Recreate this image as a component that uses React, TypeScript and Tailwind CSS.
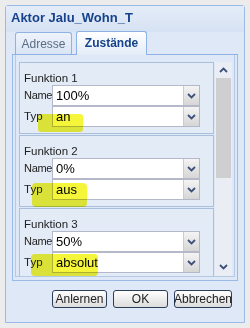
import React from "react";

const Chevron = ({ up = false }: { up?: boolean }) => (
  <svg width="9" height="6" viewBox="0 0 9 6" className={up ? "rotate-180" : ""}>
    <path d="M1 1 L4.5 4.5 L8 1" fill="none" stroke="#3d4f7a" strokeWidth="1.8" />
  </svg>
);

const Combo = ({ value }: { value: string }) => (
  <div className="flex h-[21px] w-[148px] border border-[#b5b8c8] bg-white">
    <div className="flex-1 pl-[3px] text-[13px] leading-[19px] text-black">{value}</div>
    <div className="flex w-[16px] items-center justify-center border-l border-[#c8ccd6] bg-gradient-to-b from-[#f4f4f4] to-[#d6d6d6]">
      <Chevron />
    </div>
  </div>
);

const Fieldset = ({ title, name, typ }: { title: string; name: string; typ: string }) => (
  <div className="flex h-[72px] w-[195px] shrink-0 flex-col border border-[#a9bfdc] bg-[#e3ebf7] pl-[4px] pt-[8px]">
    <div className="h-[14px] text-[11.5px] leading-[14px] text-[#222]">{title}</div>
    <div className="flex items-center">
      <div className="w-[28px] text-[11px] tracking-[-0.3px] text-[#222]">Name</div>
      <Combo value={name} />
    </div>
    <div className="flex items-center">
      <div className="w-[28px] text-[11.5px] text-[#222]">Typ</div>
      <Combo value={typ} />
    </div>
  </div>
);

export default function App() {
  return (
    <div
      className="relative h-[328px] w-[250px] overflow-hidden bg-[#ececec] pl-[5px] pt-[5px]"
      style={{ fontFamily: "'Liberation Sans', Arial, sans-serif" }}
    >
      <div className="flex h-[318px] w-[240px] flex-col rounded-t-[3px] border border-[#99bbe8] bg-[#dfe8f6]">
        <div className="h-[26px] bg-gradient-to-b from-[#e4ecf8] to-[#d6e2f3] pl-[5px] pt-[4px] text-[13px] font-bold leading-[15px] text-[#15428b]">
          Aktor Jalu_Wohn_T
        </div>
        <div className="ml-[6px] flex w-[226px] flex-col">
          <div className="flex h-[23px] items-end gap-[4px] border-b border-[#8db2e3] pl-[3px]">
            <div className="h-[22px] w-[57px] rounded-t-[3px] border border-b-0 border-[#8db2e3] bg-gradient-to-b from-[#eef3fb] to-[#d9e5f5] text-center text-[12px] leading-[22px] text-[#5a6b84]">
              Adresse
            </div>
            <div className="-mb-px h-[24px] w-[71px] rounded-t-[3px] border border-b-0 border-[#8db2e3] bg-gradient-to-b from-[#ffffff] to-[#e3ecf8] text-center text-[12px] font-bold leading-[23px] text-[#15428b]">
              Zustände
            </div>
          </div>
          <div className="h-[226px] border border-t-0 border-[#99bbe8] bg-[#dfe8f6] px-[2px] pb-[3px]">
            <div className="flex h-[222px] border border-t-0 border-[#b4c9e6] bg-[#dfe8f6]">
              <div className="flex flex-1 flex-col gap-[1px] overflow-hidden pl-[3px] pt-[7px]">
                <Fieldset title="Funktion 1" name="100%" typ="an" />
                <Fieldset title="Funktion 2" name="0%" typ="aus" />
                <Fieldset title="Funktion 3" name="50%" typ="absolut" />
              </div>
              <div className="mr-[2px] mt-[7px] flex w-[17px] flex-col items-center bg-[#eaeef4]">
                <div className="flex h-[16px] items-center justify-center">
                  <Chevron up />
                </div>
                <div className="h-[100px] w-[15px] bg-[#cfcfd1]" />
                <div className="flex-1" />
                <div className="flex h-[18px] items-center justify-center">
                  <Chevron />
                </div>
              </div>
            </div>
          </div>
        </div>
        <div className="mt-[9px] flex justify-end gap-[6px] pr-[12px]">
          {["Anlernen", "OK", "Abbrechen"].map((b, i) => (
            <div
              key={b}
              className={`flex h-[18px] items-center justify-center rounded-[3px] border border-[#2c3d5a] bg-gradient-to-b from-[#ffffff] to-[#dcdcdc] text-[12px] text-[#222] ${
                i === 0 ? "w-[55px]" : i === 1 ? "w-[55px]" : "w-[58px]"
              }`}
            >
              {b}
            </div>
          ))}
        </div>
      </div>
      <div className="pointer-events-none absolute left-[38px] top-[114px] h-[18px] w-[45px] rounded-[3px] bg-[#f5f53a] mix-blend-multiply" />
      <div className="pointer-events-none absolute left-[32px] top-[183px] h-[24px] w-[55px] rounded-[4px] bg-[#f5f53a] mix-blend-multiply" />
      <div className="pointer-events-none absolute left-[31px] top-[254px] h-[22px] w-[67px] rounded-[4px] bg-[#f5f53a] mix-blend-multiply" />
    </div>
  );
}
